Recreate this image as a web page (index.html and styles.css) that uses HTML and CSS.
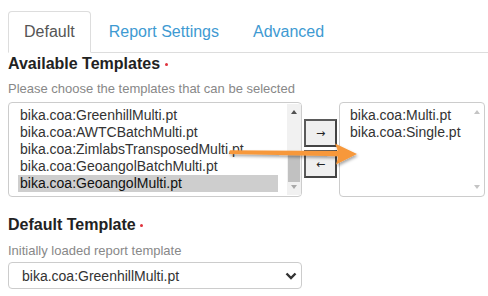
FILE: index.html
```html
<!DOCTYPE html>
<html lang="en">
<head>
<meta charset="utf-8">
<title>Report Templates</title>
<link rel="stylesheet" href="styles.css">
</head>
<body>
<div class="page">
  <ul class="tabs">
    <li class="tab active">Default</li>
    <li class="tab">Report Settings</li>
    <li class="tab">Advanced</li>
  </ul>

  <div class="field first">
    <div class="label">Available Templates <span class="req"></span></div>
    <div class="help">Please choose the templates that can be selected</div>
    <div class="picker">
      <div class="listbox left">
        <div class="options">
          <div class="opt">bika.coa:GreenhillMulti.pt</div>
          <div class="opt">bika.coa:AWTCBatchMulti.pt</div>
          <div class="opt">bika.coa:ZimlabsTransposedMulti.pt</div>
          <div class="opt">bika.coa:GeoangolBatchMulti.pt</div>
          <div class="opt selected">bika.coa:GeoangolMulti.pt</div>
        </div>
        <div class="scrollbar">
          <span class="up"></span>
          <span class="thumb"></span>
          <span class="down dim"></span>
        </div>
      </div>
      <div class="moves">
        <button type="button">&rarr;</button>
        <button type="button">&larr;</button>
      </div>
      <div class="listbox right">
        <div class="options">
          <div class="opt">bika.coa:Multi.pt</div>
          <div class="opt">bika.coa:Single.pt</div>
        </div>
        <div class="scrollbar off">
          <span class="up dim"></span>
          <span class="down dim"></span>
        </div>
      </div>
    </div>
  </div>

  <div class="field second">
    <div class="label">Default Template <span class="req"></span></div>
    <div class="help">Initially loaded report template</div>
    <div class="dropdown">
      <span>bika.coa:GreenhillMulti.pt</span>
      <svg width="12" height="8" viewBox="0 0 12 8"><path d="M1.5 1.5 L6 6 L10.5 1.5" fill="none" stroke="#333" stroke-width="2.4"/></svg>
    </div>
  </div>

  <!-- annotation arrow drawn over the picker -->
  <svg class="callout" width="488" height="296" viewBox="0 0 488 296">
    <defs>
      <filter id="shade" x="-10%" y="-50%" width="130%" height="250%">
        <feDropShadow dx="1" dy="2" stdDeviation="1.6" flood-color="#000" flood-opacity="0.35"/>
      </filter>
    </defs>
    <g filter="url(#shade)" fill="#f7983a">
      <path d="M230 150.3 Q228 152.2 230 154 L338 156.2 L338 151 Z"/>
      <path d="M335 143.5 L357 154 L336 164.5 Q340.5 154 335 143.5 Z"/>
    </g>
  </svg>
</div>
</body>
</html>
```

FILE: styles.css
```css
body {
  margin: 0;
  background: #fff;
  font-family: "Liberation Sans", Arial, Helvetica, sans-serif;
  color: #333;
}

.page {
  position: relative;
  width: 488px;
  height: 296px;
  overflow: hidden;
  padding-left: 8px;
  box-sizing: border-box;
}

/* tabs */
.tabs {
  display: flex;
  list-style: none;
  margin: 0;
  padding: 11px 0 0 0;
  border-bottom: 1px solid #ddd;
}

.tab {
  margin-right: 2px;
  margin-bottom: -1px;
  padding: 10px 15px;
  font-size: 16px;
  line-height: 20px;
  color: #3e9ad2;
  border: 1px solid transparent;
  border-radius: 4px 4px 0 0;
}

.tab.active {
  color: #555;
  background: #fff;
  border-color: #ddd;
  border-bottom-color: transparent;
}

/* fields */
.label {
  font-size: 16px;
  font-weight: bold;
  line-height: 20px;
  color: #222;
}

.req {
  display: inline-block;
  width: 3px;
  height: 3px;
  margin-left: 0;
  border-radius: 50%;
  background: #e0323c;
  vertical-align: 3px;
}

.help {
  font-size: 13px;
  line-height: 16px;
  color: #888;
}

.field.first { margin-top: 1px; }
.field.first .help { margin-top: 7px; }
.field.first .picker { margin-top: 5px; }

.field.second { margin-top: 18px; }
.field.second .help { margin-top: 8px; }
.field.second .dropdown { margin-top: 3px; }

/* dual list picker */
.picker {
  display: flex;
  height: 95px;
}

.listbox {
  display: flex;
  border: 1px solid #ccc;
  border-radius: 4px;
  box-sizing: border-box;
  background: #fff;
}

.listbox.left { width: 294px; }
.listbox.right { width: 146px; margin-left: 2px; }

.options {
  flex: 1;
  padding: 4px 9px;
  font-size: 14px;
  line-height: 17px;
  color: #333;
}

.listbox.right .options { padding-left: 8px; }

.opt {
  padding-left: 2px;
  white-space: nowrap;
}

.opt.selected { background: #cecece; color: #111; }

.scrollbar {
  position: relative;
  width: 14px;
  margin: 1px 0;
  background: #f1f1f1;
}

.scrollbar.off { background: transparent; }

.scrollbar .up,
.scrollbar .down {
  position: absolute;
  left: 4px;
  width: 0;
  height: 0;
  border-left: 3px solid transparent;
  border-right: 3px solid transparent;
}

.scrollbar .up { top: 6px; border-bottom: 4px solid #505050; }
.scrollbar .down { bottom: 6px; border-top: 4px solid #505050; }
.scrollbar .up.dim { border-bottom-color: #c4c4c4; }
.scrollbar .down.dim { border-top-color: #a8a8a8; }
.scrollbar.off .down.dim { border-top-color: #c4c4c4; }

.scrollbar .thumb {
  position: absolute;
  left: 1px;
  right: 1px;
  top: 48px;
  height: 30px;
  background: #c1c1c1;
}

.moves {
  display: flex;
  flex-direction: column;
  justify-content: center;
  gap: 3px;
  margin-left: 2px;
  padding-bottom: 2px;
}

.moves button {
  width: 33px;
  height: 28px;
  padding: 0;
  font-family: "DejaVu Sans", sans-serif;
  font-size: 11px;
  color: #222;
  background: #efefef;
  border: 2px solid #444;
  border-top-color: #5a5a5a;
  border-left-color: #5a5a5a;
}

/* single select */
.dropdown {
  display: flex;
  align-items: center;
  justify-content: space-between;
  width: 294px;
  height: 27px;
  padding: 0 4px 0 13px;
  box-sizing: border-box;
  border: 1px solid #ccc;
  border-radius: 4px;
  font-size: 14px;
  color: #333;
}

.callout {
  position: absolute;
  left: 0;
  top: 0;
  pointer-events: none;
}
```
